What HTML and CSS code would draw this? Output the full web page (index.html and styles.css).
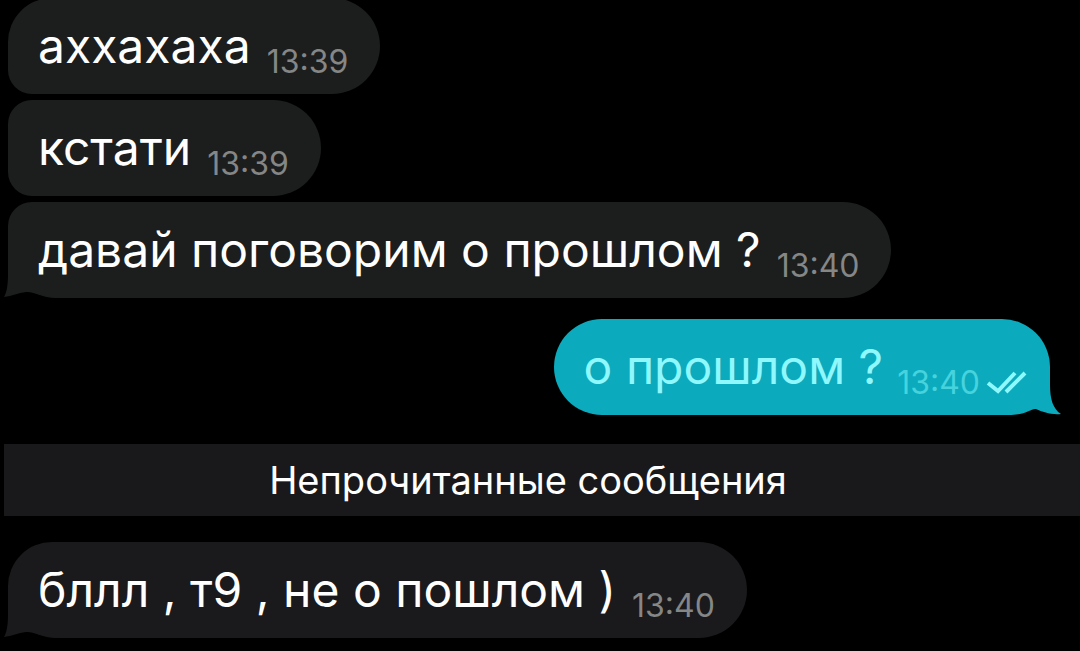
FILE: index.html
```
<!DOCTYPE html>
<html lang="ru">
<head>
    <meta charset="UTF-8">
    <meta name="viewport" content="width=device-width, initial-scale=1.0">
    <title>Чат</title>
    <link rel="stylesheet" href="styles.css">
</head>
<body>
    <main class="chat">
        <div class="message incoming first">
            <p class="text">аххахаха</p>
            <time class="time" datetime="13:39">13:39</time>
        </div>
        <div class="message incoming">
            <p class="text">кстати</p>
            <time class="time" datetime="13:39">13:39</time>
        </div>
        <div class="message incoming last">
            <p class="text">давай поговорим о прошлом ?</p>
            <time class="time" datetime="13:40">13:40</time>
            <svg class="tail" width="60" height="48" viewBox="0 0 60 48" aria-hidden="true">
                <path d="M4 0V24C4 34 3 42 0 47C8 46 14 43 22 42C32 42 40 48 60 48V0Z"/>
            </svg>
        </div>
        <div class="message outgoing">
            <p class="text">о прошлом ?</p>
            <time class="time" datetime="13:40">13:40</time>
            <svg class="checks" width="42" height="24" viewBox="0 0 42 24" role="img" aria-label="Прочитано">
                <path d="M2 12L12 20L29 2M20 21L39 2"/>
            </svg>
            <svg class="tail" width="60" height="48" viewBox="0 0 60 48" aria-hidden="true">
                <path d="M49 0V18C49 32 52 42 60 47C50 48 42 45 35 42C30 41 26 48 8 48H0V0Z"/>
            </svg>
        </div>
        <h2 class="unread">Непрочитанные сообщения</h2>
        <div class="message incoming first last">
            <p class="text">бллл , т9 , не о пошлом )</p>
            <time class="time" datetime="13:40">13:40</time>
            <svg class="tail" width="60" height="48" viewBox="0 0 60 48" aria-hidden="true">
                <path d="M4 0V24C4 34 3 42 0 47C8 46 14 43 22 42C32 42 40 48 60 48V0Z"/>
            </svg>
        </div>
    </main>
</body>
</html>
```
FILE: styles.css
```
body {
    margin: 0;
    background: #000;
    color: #fff;
    font-family: Inter, "Liberation Sans", sans-serif;
    overflow: hidden;
}
.chat {
    display: flex;
    flex-direction: column;
    align-items: flex-start;
    gap: 6px;
    margin-top: -2px;
}
.message {
    position: relative;
    isolation: isolate;
    display: flex;
    align-items: flex-end;
    padding: 16px 32px 16px 30px;
    border-radius: 48px;
}
.incoming {
    margin-left: 8px;
    background: #1c1d1d;
    border-radius: 24px 48px 48px 24px;
}
.incoming.first {
    border-top-left-radius: 44px;
}
.incoming.last {
    border-bottom-left-radius: 48px;
}
/* the tail stays under the text */
.tail {
    position: absolute;
    z-index: -1;
    bottom: 0;
}
.incoming .tail {
    left: -4px;
    fill: #1c1d1d;
}
.incoming.first.last {
    background: #1a191b;
}
.incoming.first .tail {
    fill: #1a191b;
}
.outgoing {
    align-self: flex-end;
    margin: 15px 30px 0 0;
    padding-right: 22px;
    background: #0caabd;
    color: #8ff8fc;
}
.outgoing .tail {
    right: -11px;
    fill: #0caabd;
}
.text {
    margin: 0 16px 0 0;
    font-size: 48px;
    line-height: 64px;
}
.outgoing .text {
    margin-right: 14px;
}
.time {
    color: #858686;
    font-size: 32px;
    line-height: 32px;
}
.outgoing .time {
    color: #46d3de;
}
.checks {
    margin: 0 0 4px 6px;
    fill: none;
    stroke: #8ff8fc;
    stroke-width: 4;
}
.unread {
    align-self: stretch;
    margin: 23px 0 20px 4px;
    padding-right: 28px;
    background: #19191b;
    font-size: 38px;
    font-weight: 400;
    line-height: 72px;
    text-align: center;
}
```
